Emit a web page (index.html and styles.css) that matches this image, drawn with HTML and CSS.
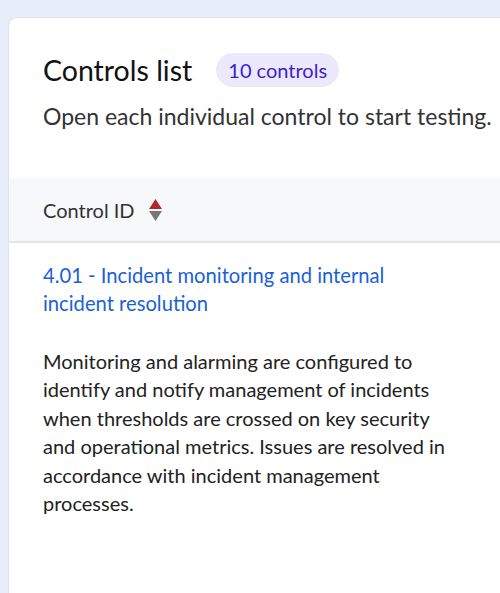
FILE: index.html
```html
<!DOCTYPE html>
<html>
<head>
<meta charset="utf-8">
<link rel="stylesheet" href="styles.css">
</head>
<body>
<div class="card">
  <div class="head">
    <div class="title-row">
      <h1 class="title">Controls list</h1>
      <span class="badge">10 controls</span>
    </div>
    <p class="subtitle">Open each individual control to start testing.</p>
  </div>
  <div class="table-head">
    <span class="th-label">Control ID</span>
    <svg class="sort" width="15" height="24" viewBox="0 0 15 24">
      <polygon points="7.5,1 14,11 1,11" fill="#b3262b"/>
      <polygon points="1,13 14,13 7.5,23" fill="#767676"/>
    </svg>
  </div>
  <div class="row">
    <a class="link" href="#">4.01 - Incident monitoring and internal incident resolution</a>
    <p class="desc">Monitoring and alarming are configured to identify and notify management of incidents when thresholds are crossed on key security and operational metrics. Issues are resolved in accordance with incident management processes.</p>
  </div>
</div>
</body>
</html>
```
FILE: styles.css
```css
html, body {
  margin: 0;
  padding: 0;
  height: 100%;
  overflow: hidden;
}
body {
  background: #e8edfb;
  font-family: Lato, "Open Sans", sans-serif;
  color: #222;
}
.card {
  margin: 17px 0 0 8px;
  width: calc(100vw - 9px);
  height: calc(100vh - 18px);
  background: #fff;
  border: 1px solid #dfe2ea;
  border-right: none;
  border-bottom: none;
  border-radius: 9px 0 0 0;
  overflow: hidden;
}
.head {
  padding: 35px 0 0 34px;
  height: 124px;
  box-sizing: border-box;
}
.title-row {
  display: flex;
  align-items: center;
  gap: 24px;
}
.title {
  margin: 0;
  font-size: 28.5px;
  font-weight: 400;
  color: #111;
  line-height: 34px;
}
.badge {
  background: #ede9fc;
  color: #3a1fd0;
  font-size: 20px;
  line-height: 34px;
  padding: 0 12px;
  border-radius: 17px;
}
.subtitle {
  margin: 14px 0 0 0;
  font-size: 23px;
  line-height: 30px;
  color: #333;
  white-space: nowrap;
}
.table-head {
  margin-top: 36px;
  height: 63px;
  background: #f7f8fa;
  border-bottom: 2px solid #e2e4e8;
  display: flex;
  align-items: center;
  padding-left: 34px;
  gap: 13px;
}
.th-label {
  font-size: 20px;
  color: #333;
}
.row {
  padding: 18px 0 0 34px;
  width: 405px;
}
.link {
  color: #1b5fd8;
  text-decoration: none;
  font-size: 20.2px;
  line-height: 28px;
  display: block;
}
.desc {
  margin: 30px 0 0 0;
  font-size: 20px;
  line-height: 28.4px;
  color: #222;
}
```
